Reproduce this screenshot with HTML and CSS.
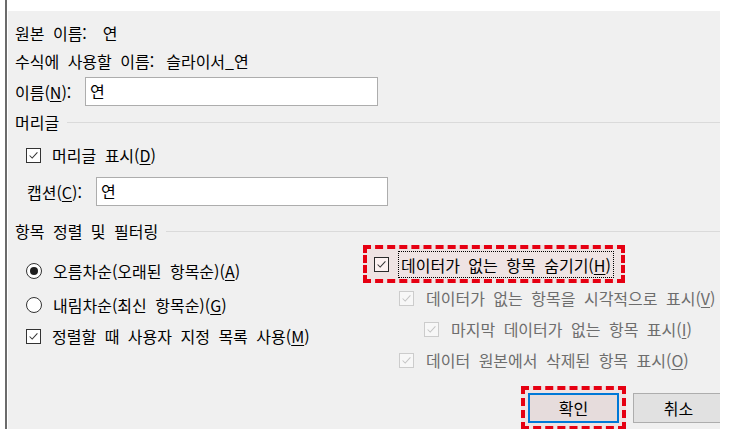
FILE: index.html
```html
<!DOCTYPE html>
<html lang="ko">
<head>
<meta charset="utf-8">
<title>슬라이서 설정</title>
<link rel="stylesheet" href="styles.css">
</head>
<body>
<div class="frame">
  <div class="panel">
    <div class="info">원본 이름:<span class="val">연</span></div>
    <div class="info info-2">수식에 사용할 이름:<span class="val val-2">슬라이서_연</span></div>
    <div class="field field-name">
      <span class="lbl">이름(<u>N</u>):</span>
      <div class="input">연</div>
    </div>
    <div class="group">머리글<span class="rule"></span></div>
    <div class="row row-header">
      <span class="cb"><svg viewBox="0 0 15 15"><polyline points="3,7.5 6,10.5 12,4"/></svg></span>
      <span class="txt">머리글 표시(<u>D</u>)</span>
    </div>
    <div class="field field-caption">
      <span class="lbl">캡션(<u>C</u>):</span>
      <div class="input">연</div>
    </div>
    <div class="group group-2">항목 정렬 및 필터링<span class="rule"></span></div>
    <div class="split">
      <div class="col-left">
        <div class="row row-r1">
          <span class="radio on"></span>
          <span class="txt">오름차순(오래된 항목순)(<u>A</u>)</span>
        </div>
        <div class="row row-r2">
          <span class="radio"></span>
          <span class="txt">내림차순(최신 항목순)(<u>G</u>)</span>
        </div>
        <div class="row row-r3">
          <span class="cb"><svg viewBox="0 0 15 15"><polyline points="3,7.5 6,10.5 12,4"/></svg></span>
          <span class="txt">정렬할 때 사용자 지정 목록 사용(<u>M</u>)</span>
        </div>
      </div>
      <div class="col-right">
        <div class="mark mark-hide">
          <span class="cb cb-focus"><svg viewBox="0 0 15 15"><polyline points="3,7.5 6,10.5 12,4"/></svg></span>
          <span class="focus">데이터가 없는 항목 숨기기(<u>H</u>)</span>
        </div>
        <div class="row dis dis-1">
          <span class="cb cb-dis"><svg viewBox="0 0 15 15"><polyline points="3,7.5 6,10.5 12,4"/></svg></span>
          <span class="txt">데이터가 없는 항목을 시각적으로 표시(<u>V</u>)</span>
        </div>
        <div class="row dis dis-2">
          <span class="cb cb-dis"><svg viewBox="0 0 15 15"><polyline points="3,7.5 6,10.5 12,4"/></svg></span>
          <span class="txt">마지막 데이터가 없는 항목 표시(<u>I</u>)</span>
        </div>
        <div class="row dis dis-3">
          <span class="cb cb-dis"><svg viewBox="0 0 15 15"><polyline points="3,7.5 6,10.5 12,4"/></svg></span>
          <span class="txt">데이터 원본에서 삭제된 항목 표시(<u>O</u>)</span>
        </div>
        <div class="buttons">
          <div class="mark mark-ok"><button class="btn btn-ok">확인</button></div>
          <button class="btn">취소</button>
        </div>
      </div>
    </div>
  </div>
</div>
</body>
</html>
```

FILE: styles.css
```css
html, body {
  margin: 0;
  padding: 0;
  background: #ffffff;
}
body {
  width: 729px;
  height: 439px;
  overflow: hidden;
  font-family: "Noto Sans CJK KR", "Noto Sans", sans-serif;
  font-size: 16px;
  word-spacing: 4px;
  color: #000;
}
u { text-underline-offset: 2px; text-decoration-thickness: 1px; }

.frame {
  margin-left: 5px;
  width: 715px;
  height: 429px;
  border-left: 2px solid #6b6b6b;
  padding: 11px 0 0 1px;
  box-sizing: border-box;
}
.panel {
  width: 712px;
  height: 418px;
  background: #f0f0f0;
  overflow: hidden;
  padding: 11px 0 0 7px;
  box-sizing: border-box;
  white-space: nowrap;
}

.info { height: 22px; line-height: 22px; }
.info-2 { margin-top: 6px; }
.val { margin-left: 16px; }
.val-2 { margin-left: 12px; }

.field { display: flex; align-items: center; height: 29px; }
.field-name { margin-top: 5px; }
.field-name .lbl { width: 70px; }
.field-name .input { width: 293px; }
.field-caption { margin-top: 11px; padding-left: 12px; }
.field-caption .lbl { width: 69px; }
.field-caption .input { width: 292px; }
.input {
  height: 29px;
  box-sizing: border-box;
  background: #fff;
  border: 1px solid #adadad;
  line-height: 27px;
  padding-left: 4px;
}

.group {
  display: flex;
  align-items: center;
  height: 22px;
  line-height: 22px;
  margin-top: 5px;
}
.group-2 { margin-top: 14px; }
.rule {
  flex: 1;
  height: 0;
  border-top: 1px solid #dadada;
  margin-left: 8px;
  margin-top: 1px;
}

.row { display: flex; align-items: center; height: 22px; line-height: 22px; }
.row .txt { margin-left: 11px; }
.row-header { margin-top: 11px; padding-left: 11px; }

.cb {
  width: 15px;
  height: 15px;
  box-sizing: border-box;
  border: 1px solid #333;
  background: #fff;
  display: inline-flex;
  flex: none;
}
.cb svg { width: 13px; height: 13px; }
.cb polyline { fill: none; stroke: #333; stroke-width: 1.2; }
.cb-focus { background: #fcf1f1; border-color: #2b2b2b; }
.cb-dis { border-color: #cccccc; background: #f7f7f7; }
.cb-dis polyline { stroke: #c4c4c4; }

.radio {
  width: 16px;
  height: 16px;
  box-sizing: border-box;
  border: 1px solid #333;
  border-radius: 50%;
  background: #fff;
  flex: none;
  display: flex;
  align-items: center;
  justify-content: center;
}
.radio.on::after {
  content: "";
  width: 8px;
  height: 8px;
  border-radius: 50%;
  background: #1f1f1f;
}

.split { display: flex; }
.col-left { width: 348px; padding-left: 11px; box-sizing: border-box; flex: none; }
.row-r1 { margin-top: 18px; }
.row-r2 { margin-top: 12px; }
.row-r3 { margin-top: 9px; }

.col-right { display: flex; flex-direction: column; align-items: flex-start; }

.mark {
  border: 4px dashed #e60012;
  background: rgba(230, 0, 0, 0.05);
  box-sizing: border-box;
}
.mark-hide {
  margin-top: 3px;
  height: 38px;
  display: flex;
  align-items: center;
  padding: 0 7px 0 7px;
}
.focus {
  margin-left: 9px;
  border: 1px dotted #000;
  padding: 0 2px;
  height: 27px;
  line-height: 26px;
  box-sizing: border-box;
}

.dis { color: #6d6d6d; }
.dis .txt { margin-left: 12px; }
.dis-1 { margin-top: 4px; margin-left: 36px; }
.dis-2 { margin-top: 9px; margin-left: 61px; }
.dis-3 { margin-top: 9px; margin-left: 36px; }

.buttons {
  display: flex;
  align-items: center;
  margin-top: 15px;
  margin-left: 158px;
  gap: 7px;
}
.mark-ok { padding: 3px; }
.btn {
  width: 91px;
  height: 30px;
  box-sizing: border-box;
  font-family: inherit;
  font-size: 16px;
  color: #000;
  background: #e1e1e1;
  border: 1px solid #adadad;
  padding: 0;
  flex: none;
}
.btn-ok {
  display: block;
  border: 2px solid #0078d7;
  background: #e6dcdc;
}
```
